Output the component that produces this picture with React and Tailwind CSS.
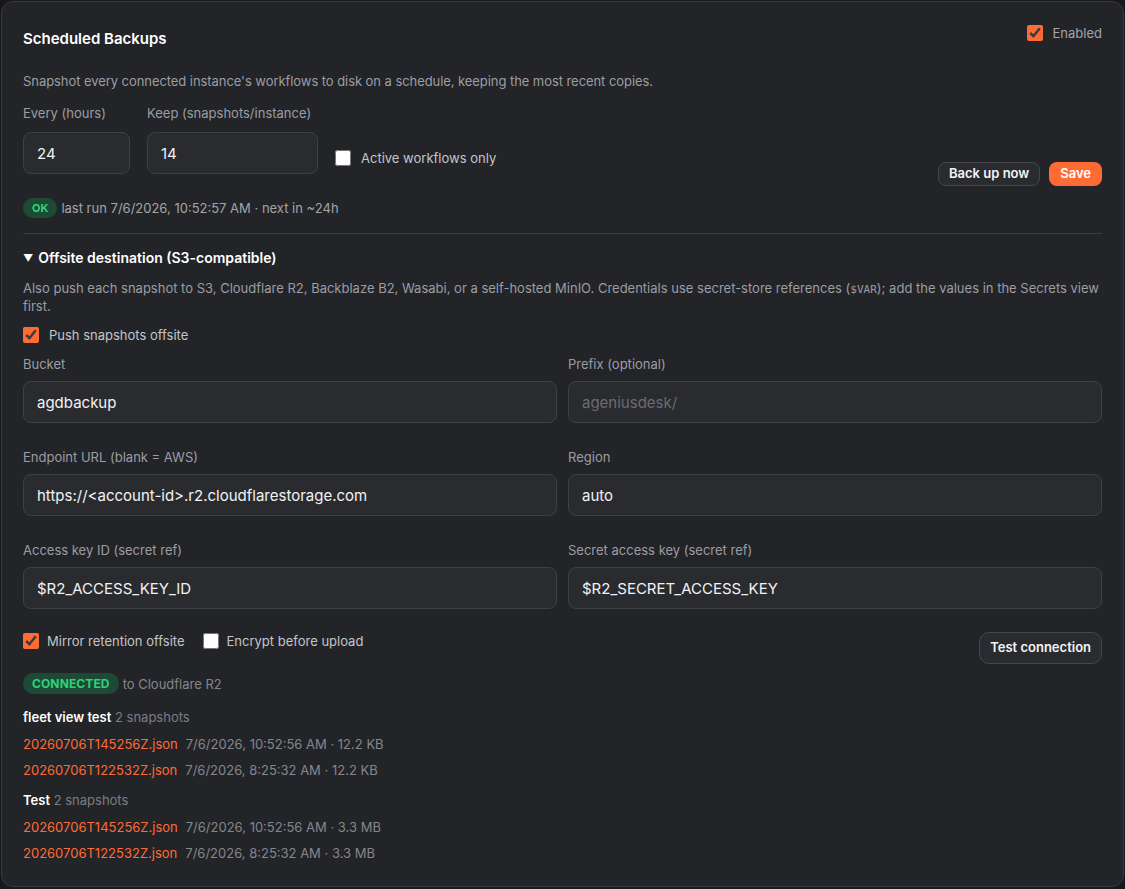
import { useState } from "react";
import clsx from "clsx";

const snapshotGroups = [
  {
    name: "fleet view test",
    files: [
      { file: "20260706T145256Z.json", meta: "7/6/2026, 10:52:56 AM · 12.2 KB" },
      { file: "20260706T122532Z.json", meta: "7/6/2026, 8:25:32 AM · 12.2 KB" },
    ],
  },
  {
    name: "Test",
    files: [
      { file: "20260706T145256Z.json", meta: "7/6/2026, 10:52:56 AM · 3.3 MB" },
      { file: "20260706T122532Z.json", meta: "7/6/2026, 8:25:32 AM · 3.3 MB" },
    ],
  },
];

const inputCls = clsx(
  "block w-full h-[42px] rounded-lg border border-[#3f4046] bg-[#2a2b2f]",
  "px-[13px] text-[15px] text-[#f2f2f4] outline-none",
  "placeholder:text-[#6b6c72]"
);

function Check({ checked, onChange, label, gap = "gap-2.5", labelCls = "text-[#c4c5ca]" }) {
  return (
    <label className={clsx("flex items-center h-[18px] cursor-pointer select-none", gap)}>
      <input
        type="checkbox"
        checked={checked}
        onChange={(e) => onChange(e.target.checked)}
        className="w-4 h-4 m-0 accent-[#ff6b35]"
      />
      <span className={clsx("text-[13px] leading-[18px]", labelCls)}>{label}</span>
    </label>
  );
}

function Field({ label, value, placeholder }) {
  const [v, setV] = useState(value || "");
  return (
    <div>
      <div className="text-[13px] leading-[18px] text-[#9c9da3]">{label}</div>
      <input
        value={v}
        placeholder={placeholder}
        onChange={(e) => setV(e.target.value)}
        className={clsx(inputCls, "mt-2")}
      />
    </div>
  );
}

export default function App() {
  const [enabled, setEnabled] = useState(true);
  const [activeOnly, setActiveOnly] = useState(false);
  const [offsite, setOffsite] = useState(true);
  const [mirror, setMirror] = useState(true);
  const [encrypt, setEncrypt] = useState(false);
  const [every, setEvery] = useState("24");
  const [keep, setKeep] = useState("14");

  return (
    <div
      className="min-h-screen bg-[#18181b] p-px"
      style={{ fontFamily: "Inter, 'Noto Sans', sans-serif" }}
    >
      <div className="rounded-xl border border-[#393a3f] bg-[#232428] px-[21px] pt-[21px] pb-[24px]">
        {/* header */}
        <div className="flex justify-between items-start">
          <h2 className="pt-[6px] text-[15px] leading-5 font-semibold text-white">Scheduled Backups</h2>
          <div className="mt-px">
            <Check checked={enabled} onChange={setEnabled} label="Enabled" labelCls="text-[#a3a4aa]" />
          </div>
        </div>

        <p className="mt-[23px] text-[13px] leading-[18px] tracking-[-0.005em] text-[#9c9da3]">
          Snapshot every connected instance's workflows to disk on a schedule, keeping the most recent copies.
        </p>

        {/* schedule row */}
        <div className="mt-[14px] flex items-start">
          <div className="w-[107px]">
            <div className="text-[13px] leading-[18px] text-[#9c9da3]">Every (hours)</div>
            <input value={every} onChange={(e) => setEvery(e.target.value)} className={clsx(inputCls, "mt-[10px]")} />
          </div>
          <div className="w-[171px] ml-[17px]">
            <div className="text-[13px] leading-[18px] text-[#9c9da3]">Keep (snapshots/instance)</div>
            <input value={keep} onChange={(e) => setKeep(e.target.value)} className={clsx(inputCls, "mt-[10px]")} />
          </div>
          <div className="ml-[17px] mt-[45px]">
            <Check checked={activeOnly} onChange={setActiveOnly} label="Active workflows only" />
          </div>
          <div className="ml-auto mt-[58px] flex gap-[9px]">
            <button className="h-6 px-[10px] rounded-lg border border-[#46474d] bg-[#2a2b2f] text-[13px] font-semibold text-[#f4f4f6]">
              Back up now
            </button>
            <button className="h-6 px-[11px] rounded-lg bg-[#ff6b35] text-[13px] font-semibold text-white">
              Save
            </button>
          </div>
        </div>

        <div className="mt-[12px] flex items-center gap-1">
          <span className="h-5 px-[9px] rounded-full bg-[#1d4a35] text-[11px] leading-5 font-bold text-[#2fd27a]">OK</span>
          <span className="text-[13px] leading-[18px] text-[#a3a4aa]">last run 7/6/2026, 10:52:57 AM · next in ~24h</span>
        </div>

        <div className="mt-[15px] border-t border-[#393a3f]" />

        {/* offsite */}
        <div className="mt-[14px] flex items-center gap-[5px] text-[14px] leading-5 font-semibold text-white">
          <span className="text-[10px] leading-5">▼</span>
          <span>Offsite destination (S3-compatible)</span>
        </div>
        <p className="mt-[11px] text-[13px] leading-[18px] text-[#9c9da3]">
          Also push each snapshot to S3, Cloudflare R2, Backblaze B2, Wasabi, or a self-hosted MinIO. Credentials use secret-store references (<code className="text-[11px] leading-none" style={{ fontFamily: "'DejaVu Sans Mono', monospace" }}>$VAR</code>); add the values in the Secrets view first.
        </p>
        <div className="mt-[11px]">
          <Check checked={offsite} onChange={setOffsite} label="Push snapshots offsite" />
        </div>

        <div className="mt-[11px] grid grid-cols-2 gap-x-[11px] gap-y-[25px]">
          <Field label="Bucket" value="agdbackup" />
          <Field label="Prefix (optional)" placeholder="ageniusdesk/" />
          <Field label="Endpoint URL (blank = AWS)" value="https://<account-id>.r2.cloudflarestorage.com" />
          <Field label="Region" value="auto" />
          <Field label="Access key ID (secret ref)" value="$R2_ACCESS_KEY_ID" />
          <Field label="Secret access key (secret ref)" value="$R2_SECRET_ACCESS_KEY" />
        </div>

        <div className="mt-[23px] flex items-start">
          <div className="flex gap-[18px]">
            <Check checked={mirror} onChange={setMirror} gap="gap-2" label="Mirror retention offsite" />
            <Check checked={encrypt} onChange={setEncrypt} gap="gap-2" label="Encrypt before upload" />
          </div>
          <button className="ml-auto h-8 px-[10px] rounded-[10px] border border-[#46474d] bg-[#2a2b2f] text-[13px] font-semibold text-[#f4f4f6]">
            Test connection
          </button>
        </div>

        <div className="mt-[9px] flex items-center gap-1">
          <span className="h-[21px] px-[9px] rounded-full bg-[#1d4a35] text-[12px] leading-[21px] font-bold tracking-[0.01em] text-[#2fd27a]">
            CONNECTED
          </span>
          <span className="text-[13px] leading-[18px] text-[#85868c]">to Cloudflare R2</span>
        </div>

        <div className="mt-[14px] flex flex-col gap-[12px]">
          {snapshotGroups.map((g) => (
            <div key={g.name}>
              <div className="text-[13px] leading-[18px]">
                <span className="font-semibold text-white">{g.name}</span>
                <span className="text-[#7c7d83]"> 2 snapshots</span>
              </div>
              <div className="mt-[9px] flex flex-col gap-[8px]">
                {g.files.map((f) => (
                  <div key={f.file + f.meta} className="flex gap-2 text-[13px] leading-[18px]">
                    <a className="text-[#ff6b35] cursor-pointer">{f.file}</a>
                    <span className="text-[#85868c]">{f.meta}</span>
                  </div>
                ))}
              </div>
            </div>
          ))}
        </div>
      </div>
    </div>
  );
}
